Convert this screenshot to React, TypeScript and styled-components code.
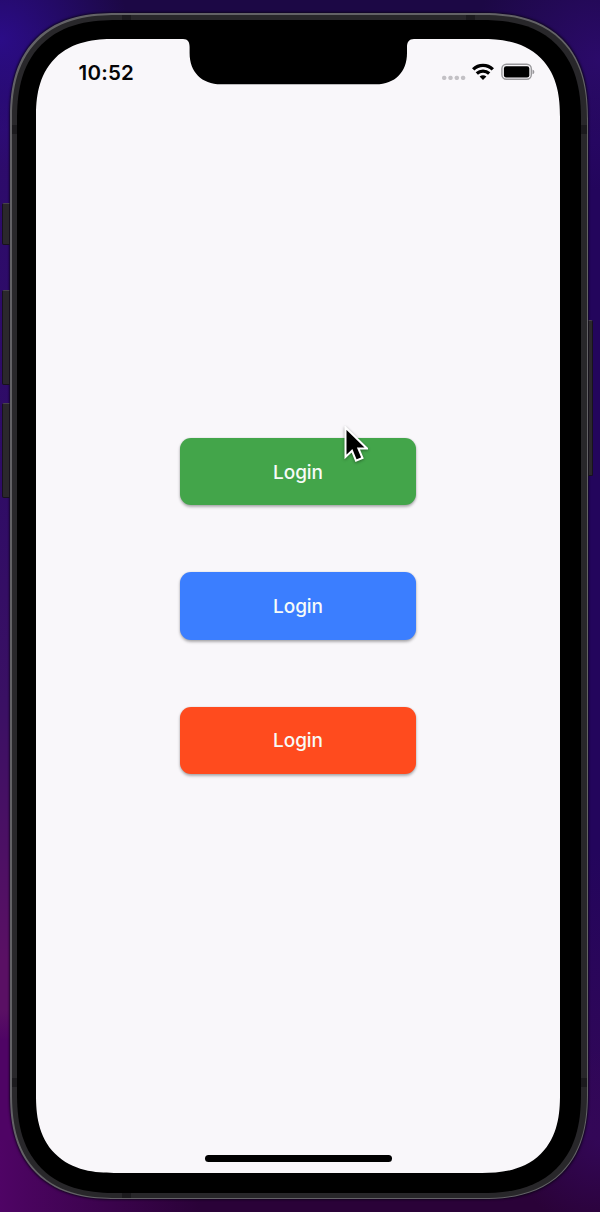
import React from 'react';
import styled, { createGlobalStyle } from 'styled-components';

const GlobalStyle = createGlobalStyle`
  *, *::before, *::after { box-sizing: border-box; }
  body { margin: 0; font-family: Inter, "Liberation Sans", sans-serif; }
`;

const Desktop = styled.main`
  width: 600px;
  height: 1212px;
  padding: 13px 12px 13px 10px;
  overflow: hidden;
  background:
    radial-gradient(circle at 0 40px, #2b0c87 0, transparent 130px),
    radial-gradient(circle at 600px 60px, #2b0a6a 0, transparent 130px),
    radial-gradient(circle at 600px 1140px, #330757 0, transparent 90px),
    linear-gradient(to right, #4f0465 0, #4b0460 20px, #2a0238 200px, #2a0238 600px) 0 1140px / 600px 72px no-repeat,
    linear-gradient(to bottom, #1c0845 0, #1c0845 40px, #23055c 140px, #23055c 850px, #330757 1140px) 300px 0 / 300px 1212px no-repeat,
    linear-gradient(to bottom, #1c0845 0, #1c0845 20px, #2d0b6c 130px, #2f0c66 480px, #3a1064 700px, #5a1064 960px, #5a1064 1010px, #4f0465 1040px, #4f0465 1212px);
`;

const Phone = styled.div`
  position: relative;
  width: 578px;
  height: 1186px;
  padding: 1.5px;
  border-radius: 88px;
  background: #636266;
  box-shadow: 0 0 2px 1px rgba(10, 4, 20, 0.7);
  @supports (corner-shape: superellipse(1.3)) {
    border-radius: 106px;
    corner-shape: superellipse(1.3);
  }
`;

const Band = styled.div`
  position: relative;
  height: 100%;
  padding: 5px 6px 5px 5px;
  border-radius: 87px;
  background: #28272a;
  overflow: hidden;
  @supports (corner-shape: superellipse(1.3)) {
    border-radius: 105px;
    corner-shape: superellipse(1.3);
  }
`;

const Bezel = styled.div`
  position: relative;
  height: 100%;
  padding: 19.5px 20.5px 20px 19.5px;
  border-radius: 82px;
  background: #000;
  @supports (corner-shape: superellipse(1.3)) {
    border-radius: 100px;
    corner-shape: superellipse(1.3);
  }
`;

const Antenna = styled.i<{ $side: 'top' | 'bottom' | 'left' | 'right'; $at: number }>`
  position: absolute;
  background: #1b1a1d;
  ${({ $side, $at }) =>
    $side === 'top' || $side === 'bottom'
      ? `${$side}: 0; left: ${$at}px; width: 9px; height: 6px;`
      : `${$side}: 0; top: ${$at}px; width: 6px; height: 9px;`}
`;

const SideKey = styled.i<{ $side: 'left' | 'right'; $top: number; $length: number }>`
  position: absolute;
  ${({ $side }) => $side}: ${({ $side }) => ($side === 'left' ? '-8px' : '-5px')};
  top: ${({ $top }) => $top}px;
  width: ${({ $side }) => ($side === 'left' ? '8px' : '5px')};
  height: ${({ $length }) => $length}px;
  border: 1px solid #17121c;
  border-top-color: #48424b;
  border-radius: ${({ $side }) => ($side === 'left' ? '2px 0 0 2px' : '0 2px 2px 0')};
  background: #2b282c;
`;

const Screen = styled.div`
  display: flex;
  flex-direction: column;
  align-items: center;
  height: 100%;
  border-radius: 65px;
  background: #f9f7fa;
  overflow: hidden;
  @supports (corner-shape: superellipse(1.3)) {
    border-radius: 78px;
    corner-shape: superellipse(1.3);
  }
`;

const StatusBar = styled.header`
  display: grid;
  grid-template-columns: 1fr 237px 1fr;
  flex: none;
  width: 100%;
  height: 46px;
`;

const Clock = styled.time`
  padding: 22px 0 0 42.5px;
  font-size: 20.5px;
  font-weight: 600;
  line-height: 24px;
  letter-spacing: 0.25px;
  color: #050506;
`;

const StatusIcons = styled.div`
  display: flex;
  align-items: flex-start;
  padding: 24px 0 0 25.5px;
`;

const Content = styled.section`
  display: flex;
  flex: 1;
  flex-direction: column;
  align-items: center;
  padding-top: 353.2px;
  gap: 67px;
`;

const LoginButton = styled.button<{ $color: string }>`
  flex: none;
  width: 236px;
  height: 67.3px;
  padding: 1.4px 0 0;
  border: 0;
  border-radius: 11px;
  background: ${({ $color }) => $color};
  box-shadow: 0 2px 3px rgba(0, 0, 0, 0.3), 0 0 2px rgba(0, 0, 0, 0.12);
  color: #f7fbf8;
  font: 500 19px/24px Inter, "Liberation Sans", sans-serif;
  letter-spacing: -0.05px;
`;

const HomeIndicator = styled.div`
  flex: none;
  width: 187px;
  height: 7px;
  margin-bottom: 10.5px;
  border-radius: 4px;
  background: #000;
`;

const Pointer = styled.svg`
  position: absolute;
  left: 333.5px;
  top: 413px;
  filter: drop-shadow(0 1px 1.5px rgba(0, 0, 0, 0.4));
`;

const WifiIcon = styled.svg`
  margin-left: 6px;
`;

const BatteryIcon = styled.svg`
  margin-left: 7px;
`;

const Notch = () => (
  <svg width="237" height="46" viewBox="0 0 237 46" aria-hidden="true">
    <path d="M0 0H3C8 0 9.6 3 9.6 8V14C9.6 33 21.6 45.3 41 45.3H196C215 45.3 227 33 227 14V8C227 3 229 0 234 0H237Z" />
  </svg>
);

const Cellular = () => (
  <svg width="24" height="18" viewBox="0 0 24 18" fill="#c3c1c5" aria-hidden="true">
    {[2.2, 8.5, 14.8, 21.1].map((x) => (
      <rect key={x} x={x - 2.1} y="12.7" width="4.2" height="4.2" rx="1.6" />
    ))}
  </svg>
);

const Wifi = () => (
  <WifiIcon width="22" height="17" viewBox="0 0 22 17" fill="none" stroke="#000" strokeWidth="3.4" aria-hidden="true">
    <path d="M1.2 6.4Q5.3 2.4 11 2.4T20.8 6.4" />
    <path d="M4.8 10.5Q7.5 8.1 11 8.1T17.2 10.5" />
    <path d="M11 17L7.6 13.6Q11 10.9 14.4 13.6Z" fill="#000" stroke="none" />
  </WifiIcon>
);

const Battery = () => (
  <BatteryIcon width="34" height="18" viewBox="0 0 34 18" aria-hidden="true">
    <rect x="0.9" y="1.3" width="29.4" height="15" rx="4.5" fill="none" stroke="#99989b" strokeWidth="1.4" />
    <rect x="2.9" y="3.3" width="25.4" height="11.2" rx="2.2" />
    <path d="M31.5 6.6Q33.4 7.2 33.4 8.9T31.5 11.2Z" fill="#99989b" />
  </BatteryIcon>
);

const buttonColors = ['#43a54a', '#3b7eff', '#ff4b1e'];

export default function App() {
  return (
    <>
      <GlobalStyle />
      <Desktop>
        <Phone>
          <SideKey $side="left" $top={190} $length={42} />
          <SideKey $side="left" $top={277} $length={95} />
          <SideKey $side="left" $top={390} $length={95} />
          <SideKey $side="right" $top={307} $length={156} />
          <Band>
            <Antenna $side="top" $at={110} />
            <Antenna $side="top" $at={454} />
            <Antenna $side="bottom" $at={110} />
            <Antenna $side="left" $at={110} />
            <Antenna $side="right" $at={110} />
            <Antenna $side="left" $at={1063} />
            <Antenna $side="right" $at={1063} />
            <Bezel>
              <Screen>
                <StatusBar>
                  <Clock>10:52</Clock>
                  <Notch />
                  <StatusIcons>
                    <Cellular />
                    <Wifi />
                    <Battery />
                  </StatusIcons>
                </StatusBar>
                <Content>
                  {buttonColors.map((color) => (
                    <LoginButton key={color} $color={color}>Login</LoginButton>
                  ))}
                </Content>
                <HomeIndicator />
              </Screen>
            </Bezel>
          </Band>
          <Pointer width="24" height="38" viewBox="0 0 24 38" aria-hidden="true">
            <path d="M1.5 1.5V31L8 24.8L12 34.7L18.5 32L14.4 22.5H23Z" fill="#000" stroke="#fff" strokeWidth="2" />
          </Pointer>
        </Phone>
      </Desktop>
    </>
  );
}
